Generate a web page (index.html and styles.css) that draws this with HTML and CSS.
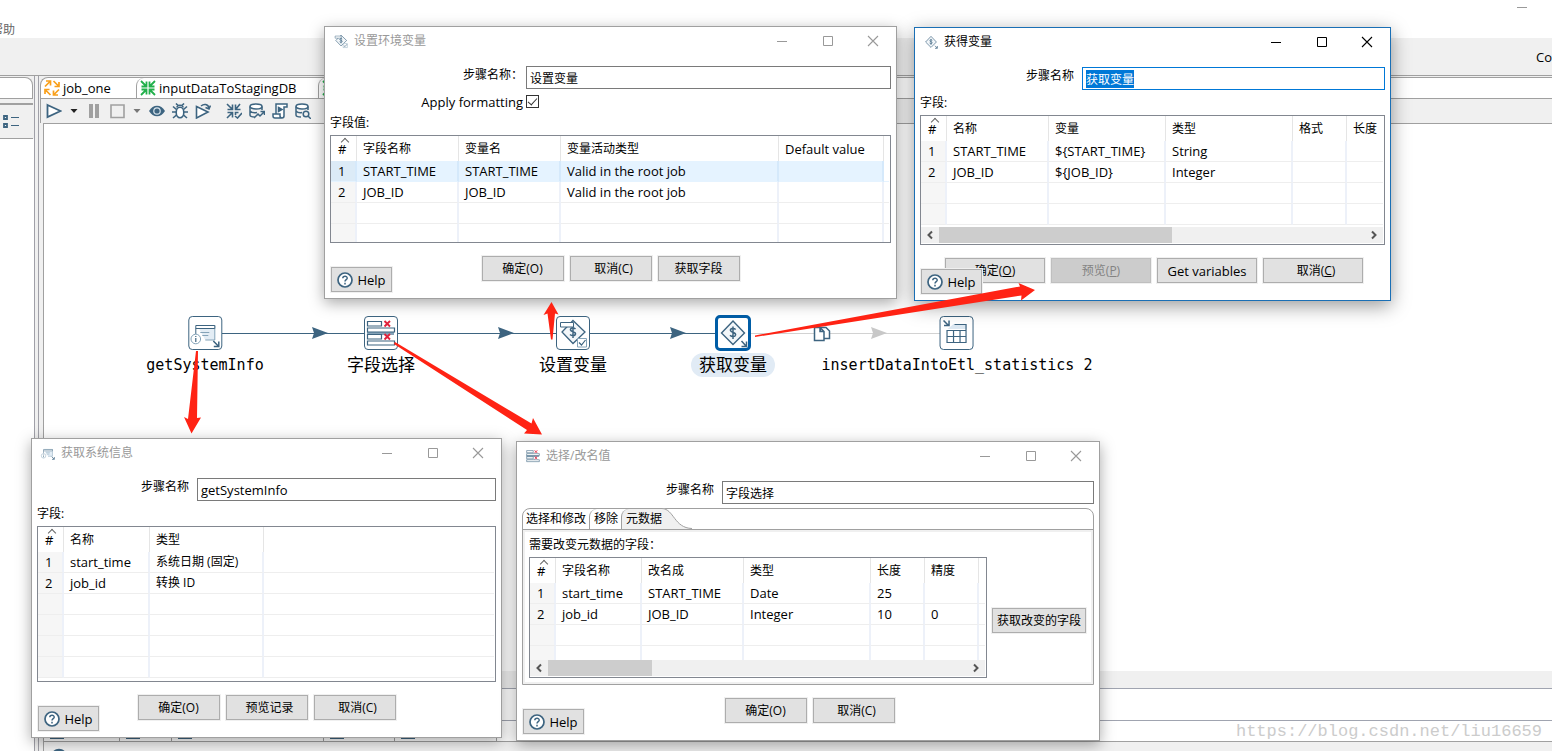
FILE: index.html
```html
<!DOCTYPE html>
<html lang="zh-CN">
<head>
<meta charset="utf-8">
<title>Spoon</title>
<link rel="stylesheet" href="styles.css">
</head>
<body>
<svg class="defs" aria-hidden="true">
  <defs>
    <symbol id="i-help" viewBox="0 0 16 16"><circle cx="8" cy="8" r="7" fill="#fff" stroke="#3d6480" stroke-width="1.7"/><path d="M5.8 6.3C5.9 3.6 10.3 3.7 10.2 6.2C10.1 7.6 8 7.7 8 9.4M8 10.8V12.4" fill="none" stroke="#3d6480" stroke-width="1.5"/></symbol>
    <symbol id="i-min" viewBox="0 0 12 12"><path d="M1 6.5H11" stroke="currentColor"/></symbol>
    <symbol id="i-max" viewBox="0 0 12 12"><path d="M1.5 1.5H10.500V10.500H1.500Z" fill="none" stroke="currentColor"/></symbol>
    <symbol id="i-close" viewBox="0 0 12 12"><path d="M1 1L11 11M11 1L1 11" stroke="currentColor" stroke-width="1.1"/></symbol>
    <symbol id="i-cycle" viewBox="0 0 16 16"><path d="M1 6.500L6 1.500M2 1H6.500V5.500M9.500 1L14.500 6M15 2V6.500H10.500M15 9.500L10 14.500M9.500 10.500V15H14M6.500 15L1.500 10M1 14V9.500H5.500" fill="none" stroke="currentColor" stroke-width="1.700"/></symbol>
    <symbol id="i-in" viewBox="0 0 16 16"><path d="M1 1L6 6M6.500 1.500V6.500H1.500M15 1L10 6M9.500 1.500V6.500H14.500M1 15L6 10M6.500 14.500V9.500H1.500M15 15L10 10M9.500 14.500V9.500H14.500" fill="none" stroke="currentColor" stroke-width="1.8"/></symbol>
    <symbol id="i-info" viewBox="0 0 34 34"><path d="M9 9.500H26.500V24H17" fill="#e3edf5" stroke="#84a3b8"/><path d="M7.500 18V9.500H26.500V12.500H7.500" fill="#fff" stroke="#3d6480"/><path d="M12 16.500H21M14 19.500H20" stroke="#84a3b8"/><circle cx="7.500" cy="23" r="4.800" fill="#fff" stroke="#84a3b8"/><path d="M7.500 20V21M7.500 22V26" stroke="#3d6480" stroke-width="1.200"/><path d="M25 25L30 30M30.500 25.500V30.500H25.500" fill="none" stroke="#3d6480" stroke-width="1.500"/></symbol>
    <symbol id="i-select" viewBox="0 0 34 34"><path d="M3 15H30V19H3Z" fill="#84a3b8"/><path d="M3.500 5.500H17.500V10H3.500ZM3.500 12H30.500V16H3.500ZM3.500 18.500H17.500V23H3.500ZM3.500 25H30.500V29H3.500Z" fill="#fff" stroke="#3d6480" stroke-width="1.200"/><path d="M20.500 5L26 10.500M26 5L20.500 10.500M20.500 18L26 23.500M26 18L20.500 23.500" stroke="#e0223c" stroke-width="1.900"/></symbol>
    <symbol id="i-setvar" viewBox="0 0 34 34"><path d="M17 4.500L29 16L17 27.500L6 16Z" fill="#f2f6f9" stroke="#3d6480" stroke-width="1.300"/><path d="M19.500 13C17.500 11 14 12 14.500 14C15 16 20 15.500 19.500 18C19 20.500 15.500 20 14 18.500M17 10V22" fill="none" stroke="#3d6480" stroke-width="1.500"/><path d="M4.500 6.500H17.500V11H4.500Z" fill="#fff" stroke="#3d6480"/><path d="M21.500 22.500H30.500V31H21.500Z" fill="#fff" stroke="#84a3b8"/><path d="M23 26.500L25.500 29L29.500 24" fill="none" stroke="#3d6480" stroke-width="1.200"/></symbol>
    <symbol id="i-getvar" viewBox="0 0 34 34"><path d="M17 5L28.500 17L17 28.500L5.500 17Z" fill="#f2f6f9" stroke="#3d6480" stroke-width="1.400"/><path d="M19.700 13.500C17.500 11.500 14 12.500 14.500 14.700C15 17 20 16 19.600 18.800C19 21.500 15.500 20.800 14 19.200M17 10.500V23" fill="none" stroke="#3d6480" stroke-width="1.500"/><path d="M25.500 25L30 30M30.500 25.500V30.500H25.500" fill="none" stroke="#3d6480" stroke-width="1.500"/></symbol>
    <symbol id="i-table" viewBox="0 0 34 34"><path d="M14 8H27V13H8Z" fill="#dce8f2"/><path d="M15 8.500H26.500V26.500H7.500V14.500H26.500M7.500 20.500H26.500M14 14.500V26.500M20.500 14.500V26.500" fill="none" stroke="#3d6480" stroke-width="1.200"/><path d="M4 4.500L9 9.500M9.500 4.500V9.500H4.500" fill="none" stroke="#3d6480" stroke-width="1.500"/></symbol>
  </defs>
</svg>

<div class="app">
  <header class="menubar">
    <span class="menu-item zh">帮助</span>
    <button class="app-min" aria-label="最小化"><svg><use href="#i-min"/></svg></button>
  </header>
  <div class="perspective">Co</div>
  <div class="workspace">
    <aside class="side">
      <div class="side-tab"></div>
      <div class="side-tools">
        <svg width="18" height="16" viewBox="0 0 18 16" fill="none" stroke="#3d6480"><path d="M2 2H5V5H2ZM2 10H5V13H2Z" stroke-width="1.800"/><path d="M9 3.500H17M9 11.500H17" stroke-width="1.200"/></svg>
      </div>
      <div class="side-view"></div>
    </aside>
    <main class="editor">
      <nav class="tabs">
        <button class="tab tab-one"><svg class="orange"><use href="#i-cycle"/></svg>job_one</button>
        <button class="tab tab-two"><svg class="green"><use href="#i-in"/></svg>inputDataToStagingDB</button>
        <button class="tab tab-three" aria-label="转换"><svg class="green"><use href="#i-in"/></svg></button>
      </nav>
      <div class="toolbar">
        <svg viewBox="0 0 16 16"><path d="M1.500 2L14.500 8L1.500 14Z" fill="#fff" stroke="#3d6480" stroke-width="1.800"/></svg>
        <svg class="caret" viewBox="0 0 10 16"><path d="M1.500 6H8.500L5 10Z" fill="#222"/></svg>
        <svg viewBox="0 0 16 16"><path d="M3 1H7V15H3ZM9 1H13V15H9Z" fill="#a0a0a0"/></svg>
        <svg viewBox="0 0 16 16"><path d="M2 2H15V14.500H2Z" fill="none" stroke="#a0a0a0" stroke-width="1.600"/></svg>
        <svg class="caret" viewBox="0 0 10 16"><path d="M1.500 6H8.500L5 10Z" fill="#777"/></svg>
        <svg viewBox="0 0 16 16"><path d="M0 8C4 1 12 1 16 8C12 15 4 15 0 8Z" fill="#3d6480"/><circle cx="8" cy="8" r="3.800" fill="#d7e3ec"/><circle cx="8" cy="8" r="2.600" fill="#3d6480"/></svg>
        <svg viewBox="0 0 16 16" fill="none" stroke="#3d6480" stroke-width="1.600"><ellipse cx="8" cy="9.500" rx="3.800" ry="5.200" fill="#fff"/><path d="M5 4.500C5 1.500 11 1.500 11 4.500M4 0.500L6 2.500M12 0.500L10 2.500M0 9H4M12 9H16M1 3.500L4.500 6.500M15 3.500L11.500 6.500M1 15L4.500 12M15 15L11.500 12"/></svg>
        <svg viewBox="0 0 16 16" fill="none" stroke="#3d6480" stroke-width="1.600"><path d="M1.500 3.500L13 9L1.500 15Z" fill="#fff"/><path d="M6 3C9 0.500 13 1 14 5M10.500 4.500L14 6L15.500 2.500"/></svg>
        <svg class="group" viewBox="0 0 16 16" fill="none" stroke="#3d6480" stroke-width="1.600"><path d="M1 1L6 6M6.500 1.500V6.500H1.500M14 1L10 6M9.500 1.500V6.500H14.500M1 15L6 10M6.500 14.500V9.500H1.500M9.500 12V9.500H12.500M9 13L11.500 15L16 10"/></svg>
        <svg viewBox="0 0 16 16" fill="none" stroke="#3d6480" stroke-width="1.500"><ellipse cx="7" cy="3.500" rx="6" ry="2.500" fill="#fff"/><path d="M1 3.500V12C1 13 3 14 6 14M13 3.500V7M1 8C3 10 6 10 8 9.500M5 15L9 11L11 13L15 9M11.500 8.500H15.500V12"/></svg>
        <svg viewBox="0 0 16 16" fill="none" stroke="#3d6480" stroke-width="1.500"><path d="M4 11V1H15V4H12V13C12 15.500 8 15.500 8 13V11H1V13C1 14.500 2 15 3 15H10" fill="#fff"/><path d="M6.500 4.500L10 6.500L6.500 8.500Z" fill="#3d6480"/></svg>
        <svg viewBox="0 0 16 16" fill="none" stroke="#3d6480" stroke-width="1.500"><ellipse cx="7" cy="3.500" rx="6" ry="2.500" fill="#fff"/><path d="M1 3.500V12C1 13 3 14 6 14M13 3.500V7M1 8C3 10 5 10 7 9.500"/><circle cx="11" cy="11" r="2.800"/><path d="M13 13L16 16"/></svg>
      </div>
      <section class="canvas">
        <svg class="hops"><g transform="translate(-44 -124)">
          <path d="M222 333.500H364M398 333.500H556M590 333.500H715" stroke="#3d6480"/>
          <path d="M751 333.500H940" stroke="#d2d2d2"/>
          <path d="M312 327L328 333L312 339L314 333ZM498 327L514 333L498 339L500 333ZM670 327L686 333L670 339L672 333Z" fill="#3d6480"/>
          <path d="M871 327L887 333L871 339L873 333Z" fill="#c8c8c8"/>
          <path d="M820.500 327.500H826L829.500 331V338.500H820.500Z" fill="#fff" stroke="#3d6480" stroke-width="1.500"/>
          <path d="M814.500 327.500H820L824 331.500V340.500H814.500ZM820 327.500V331.500H824" fill="#fff" stroke="#3d6480" stroke-width="1.500"/>
        </g></svg>
        <figure class="node n-info"><span class="box"><svg><use href="#i-info"/></svg></span><figcaption>getSystemInfo</figcaption></figure>
        <figure class="node n-select"><span class="box"><svg><use href="#i-select"/></svg></span><figcaption class="cn">字段选择</figcaption></figure>
        <figure class="node n-set"><span class="box"><svg><use href="#i-setvar"/></svg></span><figcaption class="cn">设置变量</figcaption></figure>
        <figure class="node n-get picked"><span class="box"><svg><use href="#i-getvar"/></svg></span><figcaption class="cn">获取变量</figcaption></figure>
        <figure class="node n-insert"><span class="box"><svg><use href="#i-table"/></svg></span><figcaption>insertDataIntoEtl_statistics 2</figcaption></figure>
      </section>
      <section class="results">
        <div class="hscroll"></div>
        <div class="results-title"></div>
        <div class="results-tabs"><i></i><i></i><i></i><i></i><i></i></div>
        <div class="results-tools"><svg width="16" height="16" viewBox="0 0 16 16"><path d="M0 8C4 1 12 1 16 8C12 15 4 15 0 8Z" fill="#3d6480"/></svg></div>
      </section>
    </main>
  </div>
</div>

<section class="dialog d-set" aria-label="设置环境变量">
  <header class="title"><svg class="icon"><use href="#i-setvar"/></svg><h2>设置环境变量</h2>
    <button aria-label="最小化"><svg><use href="#i-min"/></svg></button><button class="max" aria-label="最大化"><svg><use href="#i-max"/></svg></button><button aria-label="关闭"><svg><use href="#i-close"/></svg></button></header>
  <div class="body">
    <div class="field tight"><label for="s1">步骤名称：</label><input id="s1" class="zh" type="text" value="设置变量"></div>
    <div class="check-row tight"><label for="fmt">Apply formatting</label><input id="fmt" type="checkbox" checked></div>
    <p class="caption">字段值:</p>
    <div class="grid">
      <table>
        <colgroup><col class="w26"><col class="w102"><col class="w102"><col class="w218"><col class="w105"><col></colgroup>
        <thead><tr><th class="num">#</th><th>字段名称</th><th>变量名</th><th>变量活动类型</th><th class="en">Default value</th><th></th></tr></thead>
        <tbody>
          <tr class="active"><td>1</td><td>START_TIME</td><td>START_TIME</td><td>Valid in the root job</td><td></td><td></td></tr>
          <tr><td>2</td><td>JOB_ID</td><td>JOB_ID</td><td>Valid in the root job</td><td></td><td></td></tr>
          <tr><td></td><td></td><td></td><td></td><td></td><td></td></tr>
          <tr><td></td><td></td><td></td><td></td><td></td><td></td></tr>
        </tbody>
      </table>
    </div>
    <footer class="actions"><div class="buttons"><button class="btn">确定(O)</button><button class="btn shift">取消(C)</button><button class="btn">获取字段</button></div><button class="btn help"><svg><use href="#i-help"/></svg>Help</button></footer>
  </div>
</section>

<section class="dialog d-get focused" aria-label="获得变量">
  <header class="title"><svg class="icon"><use href="#i-getvar"/></svg><h2>获得变量</h2>
    <button aria-label="最小化"><svg><use href="#i-min"/></svg></button><button class="max" aria-label="最大化"><svg><use href="#i-max"/></svg></button><button aria-label="关闭"><svg><use href="#i-close"/></svg></button></header>
  <div class="body">
    <div class="field"><label for="s2">步骤名称</label><input id="s2" class="zh" type="text" value="获取变量"></div>
    <p class="caption">字段:</p>
    <div class="grid">
      <div class="rows">
      <table>
        <colgroup><col class="w26"><col class="w102"><col class="w117"><col class="w127"><col class="w54"><col></colgroup>
        <thead><tr><th class="num">#</th><th>名称</th><th>变量</th><th>类型</th><th>格式</th><th>长度</th></tr></thead>
        <tbody>
          <tr><td>1</td><td>START_TIME</td><td>${START_TIME}</td><td>String</td><td></td><td></td></tr>
          <tr><td>2</td><td>JOB_ID</td><td>${JOB_ID}</td><td>Integer</td><td></td><td></td></tr>
          <tr><td></td><td></td><td></td><td></td><td></td><td></td></tr>
          <tr><td></td><td></td><td></td><td></td><td></td><td></td></tr>
        </tbody>
      </table>
      </div>
      <div class="scroll"><svg viewBox="0 0 18 16"><path d="M11 4.500L7.500 8L11 11.500" fill="none" stroke="#555" stroke-width="2"/></svg><span class="thumb half"></span><svg viewBox="0 0 18 16"><path d="M7 4.500L10.500 8L7 11.500" fill="none" stroke="#555" stroke-width="2"/></svg></div>
    </div>
    <footer class="actions"><div class="buttons wide"><button class="btn">确定(<u>O</u>)</button><button class="btn" disabled>预览(<u>P</u>)</button><button class="btn en">Get variables</button><button class="btn shift">取消(<u>C</u>)</button></div><button class="btn help"><svg><use href="#i-help"/></svg>Help</button></footer>
  </div>
</section>

<section class="dialog d-info" aria-label="获取系统信息">
  <header class="title"><svg class="icon"><use href="#i-info"/></svg><h2>获取系统信息</h2>
    <button aria-label="最小化"><svg><use href="#i-min"/></svg></button><button class="max" aria-label="最大化"><svg><use href="#i-max"/></svg></button><button aria-label="关闭"><svg><use href="#i-close"/></svg></button></header>
  <div class="body">
    <div class="field"><label for="s3">步骤名称</label><input id="s3" type="text" value="getSystemInfo"></div>
    <p class="caption">字段:</p>
    <div class="grid">
      <table>
        <colgroup><col class="w26"><col class="w86"><col class="w114"><col></colgroup>
        <thead><tr><th class="num">#</th><th>名称</th><th>类型</th><th></th></tr></thead>
        <tbody>
          <tr><td>1</td><td>start_time</td><td class="zh">系统日期 (固定)</td><td></td></tr>
          <tr><td>2</td><td>job_id</td><td class="zh">转换 ID</td><td></td></tr>
          <tr><td></td><td></td><td></td><td></td></tr>
          <tr><td></td><td></td><td></td><td></td></tr>
          <tr><td></td><td></td><td></td><td></td></tr>
          <tr><td></td><td></td><td></td><td></td></tr>
        </tbody>
      </table>
    </div>
    <footer class="actions"><div class="buttons"><button class="btn">确定(O)</button><button class="btn shift">预览记录</button><button class="btn shift">取消(C)</button></div><button class="btn help"><svg><use href="#i-help"/></svg>Help</button></footer>
  </div>
</section>

<section class="dialog d-select" aria-label="选择/改名值">
  <header class="title"><svg class="icon"><use href="#i-select"/></svg><h2>选择/改名值</h2>
    <button aria-label="最小化"><svg><use href="#i-min"/></svg></button><button class="max" aria-label="最大化"><svg><use href="#i-max"/></svg></button><button aria-label="关闭"><svg><use href="#i-close"/></svg></button></header>
  <div class="body">
    <div class="field"><label for="s4">步骤名称</label><input id="s4" class="zh" type="text" value="字段选择"></div>
    <div class="folder">
      <div class="folder-tabs">
        <button>选择和修改</button><button>移除</button><button class="current">元数据</button>
        <svg class="curve" viewBox="0 0 30 21"><path d="M0 0C12 1 12 20 30 20.500V21H0Z" fill="#f0f0f0"/><path d="M0 0.500C12 1 12 20 30 20.500" fill="none" stroke="#a0a0a0"/></svg>
      </div>
      <div class="pane">
        <p class="caption">需要改变元数据的字段：</p>
        <div class="pane-row">
          <div class="grid">
            <div class="rows">
            <table>
              <colgroup><col class="w26"><col class="w86"><col class="w102"><col class="w127"><col class="w54"><col class="w54"><col></colgroup>
              <thead><tr><th class="num">#</th><th>字段名称</th><th>改名成</th><th>类型</th><th>长度</th><th>精度</th><th></th></tr></thead>
              <tbody>
                <tr><td>1</td><td>start_time</td><td>START_TIME</td><td>Date</td><td>25</td><td></td><td></td></tr>
                <tr><td>2</td><td>job_id</td><td>JOB_ID</td><td>Integer</td><td>10</td><td>0</td><td></td></tr>
                <tr><td></td><td></td><td></td><td></td><td></td><td></td><td></td></tr>
                <tr><td></td><td></td><td></td><td></td><td></td><td></td><td></td></tr>
              </tbody>
            </table>
            </div>
            <div class="scroll"><svg viewBox="0 0 18 16"><path d="M11 4.500L7.500 8L11 11.500" fill="none" stroke="#555" stroke-width="2"/></svg><span class="thumb quarter"></span><svg viewBox="0 0 18 16"><path d="M7 4.500L10.500 8L7 11.500" fill="none" stroke="#555" stroke-width="2"/></svg></div>
          </div>
          <button class="btn">获取改变的字段</button>
        </div>
      </div>
    </div>
    <footer class="actions"><div class="buttons"><button class="btn">确定(O)</button><button class="btn shift">取消(C)</button></div><button class="btn help"><svg><use href="#i-help"/></svg>Help</button></footer>
  </div>
</section>

<svg class="arrows" aria-hidden="true">
  <path d="M196 351H198L197 418L201 417.500L191.500 433.500L184 417L188 419Z"/>
  <path d="M394 344L395 342L531.500 423.500L533 418L542 434.500L524 433.500L527 430Z"/>
  <path d="M551 339.500H552.500L555 313.500L558.500 314.500L551.500 302L543.500 315L547.500 313.500Z"/>
  <path d="M755 337V335.500L1020 286.500L1018.500 283L1035 290L1021 300.500L1021.500 295.500Z"/>
</svg>
<p class="watermark">https://blog.csdn.net/liu16659</p>
<script>
  const stepName = document.getElementById("s2");
  stepName.focus({ preventScroll: true });
  stepName.select();
</script>
</body>
</html>
```
FILE: styles.css
```css
* { box-sizing: border-box; }
html, body { height: 100%; }
body {
  margin: 0;
  position: relative;
  overflow: hidden;
  background: #fff;
  color: #000;
  font: 13px/18px "Open Sans", "Noto Sans CJK SC", sans-serif;
}
button, input { font: inherit; color: inherit; margin: 0; padding: 0; }
button { border: 0; background: none; }
p, h2, figure { margin: 0; }
svg { display: block; flex: none; }
.defs { position: absolute; width: 0; height: 0; }
.zh, .caption, .btn, .title h2, .field label, th, .folder-tabs { font-size: 12px; }

/* application window */
.app { display: flex; flex-direction: column; height: 100%; }
.menubar { display: flex; justify-content: space-between; height: 38px; }
.menu-item { margin: 21px 0 0 -9px; color: #666; }
.app-min { width: 60px; height: 14px; color: #999; }
.app-min svg { width: 12px; height: 12px; margin: 0 auto; }
.perspective { height: 37px; background: #f0f0f0; text-align: right; line-height: 38px; }
.workspace { flex: 1; display: flex; gap: 3px; min-height: 0; background: #f0f0f0; border-top: 1px solid #a0a0a0; }
.side { display: flex; flex-direction: column; width: 35px; border-right: 1px solid #a0a0a8; }
.side-tab { height: 22px; margin: 1px 1px 0 0; background: #fff; border: solid #a0a0a0; border-width: 1px 1px 1px 0; border-top-right-radius: 8px; }
.side-tools { height: 36px; margin: 4px 1px 0 0; padding: 9px 0 0 2px; border: solid #a0a0a0; border-width: 2px 0 1px; }
.side-view { flex: 1; background: #fff; }
.editor { flex: 1; min-width: 0; display: flex; flex-direction: column; border-left: 1px solid #a0a0a8; padding-left: 1px; }
.tabs { display: flex; height: 22px; margin-top: 1px; border: solid #a0a0a0; border-width: 1px 0 1px 1px; border-top-left-radius: 8px; background: #fff; }
.tab { display: flex; align-items: center; gap: 3px; padding-left: 3px; text-align: left; }
.tab + .tab { border-left: 1px solid #a0a0a0; border-top-left-radius: 8px; }
.tab svg { width: 16px; height: 16px; }
.tab-one { width: 95px; }
.tab-two { width: 182px; }
.orange { color: #f9a01b; }
.green { color: #21b04b; }
.toolbar { display: flex; align-items: center; gap: 7px; height: 24px; padding-left: 5px; border-left: 1px solid #a0a0a0; }
.toolbar svg { width: 16px; height: 16px; }
.toolbar .caret { width: 10px; }
.toolbar .group { margin-left: 8px; }
.canvas { flex: 1; position: relative; margin-left: 3px; background: #fff; border: solid #a0a0a0; border-width: 1px 0 0 1px; }
.hops { position: absolute; left: 0; top: 0; width: 100%; height: 100%; }
.node { position: absolute; top: 192px; display: flex; flex-direction: column; align-items: center; gap: 3px; transform: translateX(-50%); font: 15px/24px "DejaVu Sans Mono", "Noto Sans CJK SC", monospace; white-space: nowrap; }
.node .box { width: 34px; height: 34px; background: #fff; border: 1px solid #3d6480; border-radius: 4px; }
.node .box svg { width: 34px; height: 34px; margin: -1px; }
.node .cn { font-size: 17px; padding: 0 8px; border-radius: 12px; }
.picked .box { border-color: #005da6; outline: 3px solid #005da6; outline-offset: -2px; }
.picked .cn { background: #e1ebf5; }
.n-info { left: 161px; }
.n-select { left: 337px; }
.n-set { left: 529px; }
.n-get { left: 689px; }
.n-insert { left: 913px; }
.results { border-left: 1px solid #a0a0a0; margin-left: 3px; background: #fff; }
.hscroll { height: 17px; background: #f0f0f0; }
.results-title { height: 33px; border: solid #a0a4b0; border-width: 1px 0; }
.results-tabs { display: grid; grid-template-columns: 76px 52px 152px 71px 102px; align-items: end; height: 21px; border-bottom: 1px solid #a0a0a0; }
.results-tabs i { height: 8px; border-right: 1px solid #a0a0a0; background: linear-gradient(#3d6480, #3d6480) 6px 4px / 14px 2px no-repeat; }
.results-tools { height: 9px; padding: 4px 0 0 7px; background: #f0f0f0; overflow: hidden; }

/* dialogs */
.dialog { position: absolute; background: #fff; border: 1px solid #a0a0a0; box-shadow: 0 4px 14px rgba(0, 0, 0, .34); color: #000; }
.focused { border-color: #1a6fb5; box-shadow: 0 5px 18px rgba(0, 0, 0, .4); }
.d-set { left: 324px; top: 26px; width: 573px; }
.d-get { left: 914px; top: 27px; width: 477px; }
.d-info { left: 31px; top: 438px; width: 471px; }
.d-select { left: 516px; top: 441px; width: 584px; }
.title { display: flex; align-items: center; height: 28px; padding-left: 8px; color: #999; }
.title .icon { width: 16px; height: 16px; margin-right: 5px; }
.title h2 { flex: 1; font-weight: 400; }
.title button { width: 46px; height: 28px; }
.title .max { width: 45px; }
.title button svg { width: 12px; height: 12px; margin: 0 auto; }
.focused .title { color: #000; }
.body { padding: 11px 5px 6px; }
.field { display: flex; }
.field label { flex: none; padding-right: 8px; text-align: right; }
.tight label { padding-right: 3px; }
.d-set label { width: 196px; }
.d-get label { width: 162px; }
.d-info label { width: 160px; }
.d-select label { width: 200px; }
.field input { flex: 1; min-width: 0; height: 23px; padding: 0 3px; border: 1px solid #7a7a7a; background: #fff; outline: 0; }
.focused .field input { border-color: #0078d7; }
input::selection { background: #0078d7; color: #fff; }
.check-row { display: flex; align-items: center; height: 21px; padding-top: 4px; }
.check-row label { flex: none; text-align: right; }
.check-row input { appearance: none; display: grid; place-items: start center; width: 13px; height: 13px; border: 1px solid #333; background: #fff; }
.check-row input::after { content: ""; width: 4px; height: 8px; border: solid #333; border-width: 0 1px 1px 0; transform: rotate(42deg); }
.caption { line-height: 25px; }
.grid { display: flex; flex-direction: column; overflow: hidden; border: 1px solid #828790; padding: 0 1px 1px 0; background: #fff; }
.d-set .grid { height: 108px; }
.d-get .grid { height: 130px; }
.d-info .grid { height: 156px; }
.d-select .grid { height: 121px; flex: 1; min-width: 0; }
.rows { flex: 1; min-height: 0; overflow: hidden; }
table { width: 100%; table-layout: fixed; border-collapse: separate; border-spacing: 0; }
th { position: relative; height: 25px; padding: 0 0 0 6px; border-right: 1px solid #e5e5e5; text-align: left; font-weight: 400; line-height: 18px; }
th.en, .btn.en, th.num { font-size: 13px; }
td { height: 21px; padding: 0 0 0 6px; border-right: 2px solid #edf1f9; border-bottom: 1px solid #eee; line-height: 18px; white-space: nowrap; }
td:first-child, th.num { padding-left: 7px; }
td:first-child { background: #f6f6f6; }
td:last-child, th:last-child { border-right: 0; }
.active td { background: #e5f3ff; border-color: #d5e9fb; border-bottom-color: #e5f3ff; }
.active td:first-child { background: #dcebf7; }
.active td:last-child { background: none; }
.num::before { content: ""; position: absolute; left: 11px; top: 3px; width: 5px; height: 5px; border: solid #666; border-width: 1px 0 0 1px; transform: rotate(45deg); }
.w26 { width: 26px; }
.w54 { width: 54px; }
.w86 { width: 86px; }
.w102 { width: 102px; }
.w105 { width: 105px; }
.w114 { width: 114px; }
.w117 { width: 117px; }
.w127 { width: 127px; }
.w218 { width: 218px; }
.scroll { display: flex; height: 16px; background: #f0f0f0; }
.scroll svg { width: 18px; height: 16px; }
.scroll svg:last-child { margin-left: auto; }
.thumb { background: #cdcdcd; }
.half { width: 233px; }
.quarter { width: 104px; }
.actions { display: grid; margin-top: 13px; }
.actions > * { grid-area: 1 / 1; }
.buttons { display: flex; gap: 6px; justify-self: center; height: 36px; }
.btn { height: 25px; border: 1px solid #adadad; background: #e1e1e1; box-shadow: 0 0 0 1px #f0f0f0; white-space: nowrap; }
.buttons .btn { width: 82px; }
.wide .btn { width: 100px; }
.wide, .d-select .buttons { padding-left: 3px; }
.buttons .shift { padding-left: 6px; }
.btn:disabled { background: #ccc; border-color: #bfbfbf; color: #838383; }
.help { display: flex; align-items: center; justify-content: center; gap: 4px; align-self: end; justify-self: start; width: 61px; margin-left: 1px; font-size: 13px; }
.help svg { width: 16px; height: 16px; }

/* tab folder */
.folder { margin-top: 4px; border: 1px solid #a0a0a0; border-radius: 8px 8px 0 0; }
.folder-tabs { display: flex; height: 21px; border-bottom: 1px solid #a0a0a0; }
.folder-tabs button { padding: 0 3px; }
.folder-tabs button + button { padding-left: 4px; border-left: 1px solid #a0a0a0; border-top-left-radius: 8px; }
.folder-tabs .current { padding-right: 0; background: #f0f0f0; }
.curve { width: 30px; height: 21px; margin-top: -1px; }
.pane { padding: 2px 6px 6px; box-shadow: inset 0 0 0 2px #f0f0f0; }
.pane-row { display: flex; align-items: center; gap: 5px; }
.pane-row .btn { width: 94px; margin: 6px 1px 0 0; }

/* annotations */
.arrows { position: absolute; left: 0; top: 0; width: 100%; height: 100%; fill: #ff2314; pointer-events: none; }
.watermark { position: absolute; right: 10px; bottom: 7px; color: #ccc; font: 17px/24px "Liberation Mono", monospace; }
```
